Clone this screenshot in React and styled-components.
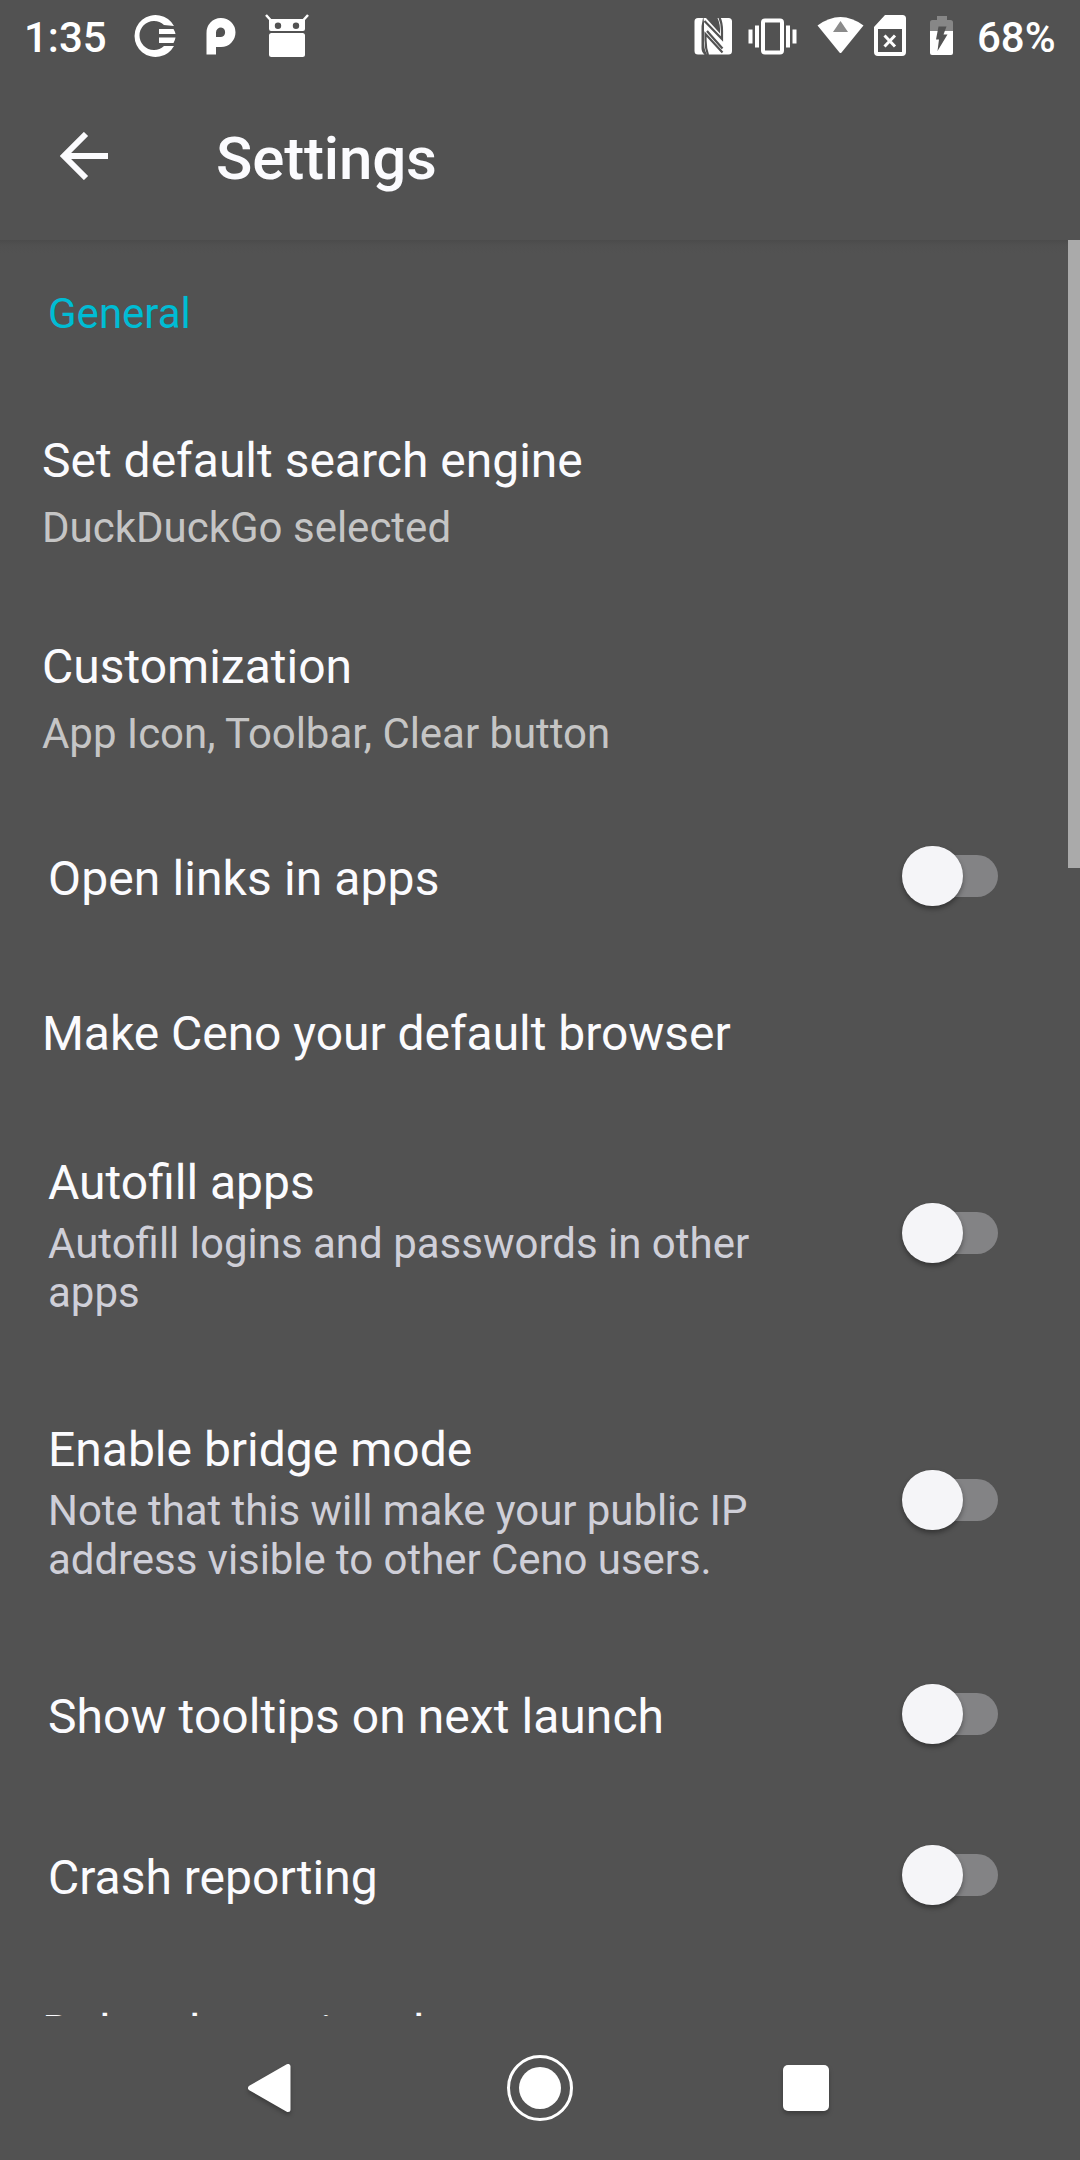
import React from "react";
import styled, { createGlobalStyle } from "styled-components";

const Global = createGlobalStyle`
  * { box-sizing: border-box; }
  html, body { margin: 0; padding: 0; background: #525252; }
  body { font-family: Roboto, "Noto Sans", sans-serif; }
`;

const Screen = styled.div`
  width: 1080px;
  height: 2160px;
  display: flex;
  flex-direction: column;
  overflow: hidden;
  background: #525252;
  color: #fbfbfe;
`;

const StatusBar = styled.header`
  height: 72px;
  flex: none;
  display: flex;
  align-items: center;
  padding: 0 25px 0 24px;
  color: #fff;
  font-size: 42px;
  font-weight: 500;
  line-height: 72px;

  svg { display: block; flex: none; }
`;

const StatusText = styled.span`
  width: ${(p) => p.$width}px;
  padding-top: 3px;
  white-space: nowrap;
`;

const Spacer = styled.div`
  flex: 1;
`;

const Toolbar = styled.div`
  height: 168px;
  flex: none;
  display: flex;
  align-items: flex-start;
  padding: 44px 60px 0;
  gap: 108px;
`;

const BackButton = styled.button`
  width: 48px;
  height: 80px;
  padding: 0;
  border: 0;
  background: none;
  color: inherit;
  display: flex;
  align-items: center;
`;

const Heading = styled.h1`
  margin: 0;
  padding-top: 8px;
  font-size: 60px;
  line-height: 70px;
  font-weight: 500;
  letter-spacing: -0.15px;
`;

const Content = styled.main`
  height: 1776px;
  flex: none;
  display: flex;
  overflow: hidden;
  background: linear-gradient(#4b4b4b, #505050 5px, #525252 13px);
`;

const List = styled.div`
  flex: 1;
`;

const Scrollbar = styled.div`
  width: 12px;
  height: 628px;
  background: #aaa;
`;

const Category = styled.div`
  height: 144px;
  padding: 49px 48px 0;
  font-size: 42px;
  line-height: 49px;
  color: #00bcd4;
`;

const Row = styled.div`
  height: ${(p) => p.$height}px;
  padding: 49px 0 0 42px;
`;

const SwitchRow = styled.div`
  height: ${(p) => p.$height}px;
  display: flex;
  align-items: center;
  justify-content: space-between;
  padding: 0 70px 0 48px;
`;

const Texts = styled.div`
  width: 740px;
  padding-top: 5px;
`;

const Title = styled.div`
  font-size: 48px;
  line-height: 56px;
  letter-spacing: ${(p) => p.$tracking || 0}px;
  white-space: nowrap;
`;

const Summary = styled.div`
  font-size: 42px;
  line-height: 49px;
  letter-spacing: ${(p) => p.$tracking || 0}px;
  margin-top: ${(p) => (p.$muted ? 14 : 8)}px;
  color: ${(p) => (p.$muted ? "#c5c5c5" : "#cfcfd8")};
`;

const Track = styled.div`
  width: 78px;
  height: 42px;
  margin-bottom: 1px;
  display: flex;
  align-items: center;
  background: #838385;
  border-radius: 21px;
`;

const Thumb = styled.div`
  flex: none;
  width: 60.6px;
  height: 60.6px;
  margin-left: -18px;
  border-radius: 50%;
  background: #f5f5f8;
  box-shadow: 0 3px 5px rgba(0, 0, 0, 0.36);
`;

const NavBar = styled.nav`
  height: 144px;
  flex: none;
  display: flex;
  justify-content: center;
  align-items: center;
  gap: 186px;

  svg { display: block; filter: drop-shadow(0 3px 2px rgba(0, 0, 0, 0.25)); }
  svg:nth-child(2) { filter: none; }
`;

const Switch = () => (
  <Track role="switch" aria-checked="false">
    <Thumb />
  </Track>
);

const LinkItem = ({ title, summary, height = 206, titleTracking, summaryTracking }) => (
  <Row $height={height}>
    <Title $tracking={titleTracking}>{title}</Title>
    {summary && <Summary $muted $tracking={summaryTracking}>{summary}</Summary>}
  </Row>
);

const SwitchItem = ({ title, summary, height = 161, titleTracking, summaryTracking }) => (
  <SwitchRow $height={height}>
    <Texts>
      <Title $tracking={titleTracking}>{title}</Title>
      {summary && <Summary $tracking={summaryTracking}>{summary}</Summary>}
    </Texts>
    <Switch />
  </SwitchRow>
);

const NotificationIcons = () => (
  <svg width="190" height="72" viewBox="129 0 190 72" fill="#fff">
    <path d="M174 26A21 21 0 1 0 174 46H164A14.5 14.5 0 1 1 164 25Z" />
    <path d="M159 29H173.500Q175 31.500 175.500 34H159ZM159 37.500H175.500Q175 40.500 173.500 43H159Z" />
    <path fillRule="evenodd" d="M206.500 54.500V33A14.500 14.500 0 1 1 221 47H216V54.500ZM221 27.500A5 5 0 0 0 216 32.500V37H221A4.800 4.800 0 0 0 221 27.500Z" />
    <path d="M266 15L271 20.500M308 15L303 20.500" stroke="#fff" strokeWidth="2.500" />
    <path fillRule="evenodd" d="M269 19H305V29Q305 31 303 31H271Q269 31 269 29ZM278 22.500A3.200 3.200 0 1 0 278 28.900A3.200 3.200 0 0 0 278 22.500ZM296 22.500A3.200 3.200 0 1 0 296 28.900A3.200 3.200 0 0 0 296 22.500Z" />
    <rect x="269" y="33" width="36" height="24" rx="2.500" />
  </svg>
);

const SystemIcons = () => (
  <svg width="287" height="72" viewBox="690 0 287 72" fill="#fff">
    <path d="M698 18H703Q701 25 701.500 34V48Q701.500 52 704.500 54.500H698Q694.500 54.500 694.500 51V21.500Q694.500 18 698 18Z" />
    <path d="M703.500 18H706L720 33.500Q720.500 24 717.500 18H728.500Q732 18 732 21.500V51Q732 54.500 728.500 54.500H707Q703.500 49 704 38V22.500Z" />
    <path d="M704.500 21L722 39V31Q722 23 719.500 17.500M722.500 52.500L705.500 34V40Q705.500 48 708 55M707 31L722.500 48.500" fill="none" stroke="#525252" strokeWidth="2.200" />
    <rect x="763" y="20.500" width="19" height="32" rx="2" fill="none" stroke="#fff" strokeWidth="4" />
    <path d="M748.500 29.500H752.500V43.500H748.500ZM755 25.500H759V47.500H755ZM786 25.500H790V47.500H786ZM792.500 29.500H796.500V43.500H792.500Z" />
    <path d="M817.500 25.500Q840.500 8.500 863.500 25.500L841.500 52.500Q840.500 53.500 839.500 52.500Z" />
    <path d="M840.500 21L848 32H833Z" fill="#8b8b8b" />
    <path fillRule="evenodd" d="M885 15H902.500Q906 15 906 18.500V52Q906 56 902 56H878Q874 56 874 52V27ZM878 29V52H902V29Z" />
    <path d="M884.500 35.500L895 46.500M895 35.500L884.500 46.500" stroke="#fff" strokeWidth="3" />
    <path d="M937 16H947V20H950.500Q953 20 953 22.500V32H930V22.500Q930 20 932.500 20H937Z" fill="#878787" />
    <path d="M930 31H953V53Q953 55 951 55H932Q930 55 930 53Z" />
    <path d="M938.500 26.500H946.500L943.500 34.500H947.500L937.500 51L939 39.500H936Z" fill="#525252" />
  </svg>
);

const BackArrow = () => (
  <svg width="48" height="48" viewBox="0 0 48 48" fill="none" stroke="#fbfbfe" strokeWidth="6">
    <path d="M48 24H5M26 2L4 24L26 46" />
  </svg>
);

export default function App() {
  return (
    <>
      <Global />
      <Screen>
        <StatusBar>
          <StatusText $width={105}>1:35</StatusText>
          <NotificationIcons />
          <Spacer />
          <SystemIcons />
          <StatusText $width={78}>68%</StatusText>
        </StatusBar>
        <Toolbar>
          <BackButton aria-label="Back"><BackArrow /></BackButton>
          <Heading>Settings</Heading>
        </Toolbar>
        <Content>
          <List>
            <Category>General</Category>
            <LinkItem title="Set default search engine" summary="DuckDuckGo selected" />
            <LinkItem title="Customization" summary="App Icon, Toolbar, Clear button" summaryTracking={-0.05} />
            <SwitchItem title="Open links in apps" titleTracking={0.11} />
            <LinkItem title="Make Ceno your default browser" height={143} titleTracking={-0.04} />
            <SwitchItem title="Autofill apps" summary="Autofill logins and passwords in other apps" height={267} />
            <SwitchItem
              title="Enable bridge mode"
              summary="Note that this will make your public IP address visible to other Ceno users."
              height={267}
              summaryTracking={-0.06}
            />
            <SwitchItem title="Show tooltips on next launch" titleTracking={0.06} />
            <SwitchItem title="Crash reporting" />
            <LinkItem title="Delete browsing data" />
          </List>
          <Scrollbar />
        </Content>
        <NavBar>
          <svg width="80" height="72" viewBox="0 0 80 72">
            <path d="M10.500 36L48 14.500V57.500Z" fill="#fff" stroke="#fff" strokeWidth="5" strokeLinejoin="round" />
          </svg>
          <svg width="68" height="72" viewBox="0 0 68 72">
            <circle cx="34" cy="36" r="31.500" fill="none" stroke="#fff" strokeWidth="3" />
            <circle cx="34" cy="36" r="21" fill="#fff" />
          </svg>
          <svg width="80" height="72" viewBox="0 0 80 72">
            <rect x="23" y="13" width="46" height="46" rx="5" fill="#fff" />
          </svg>
        </NavBar>
      </Screen>
    </>
  );
}
